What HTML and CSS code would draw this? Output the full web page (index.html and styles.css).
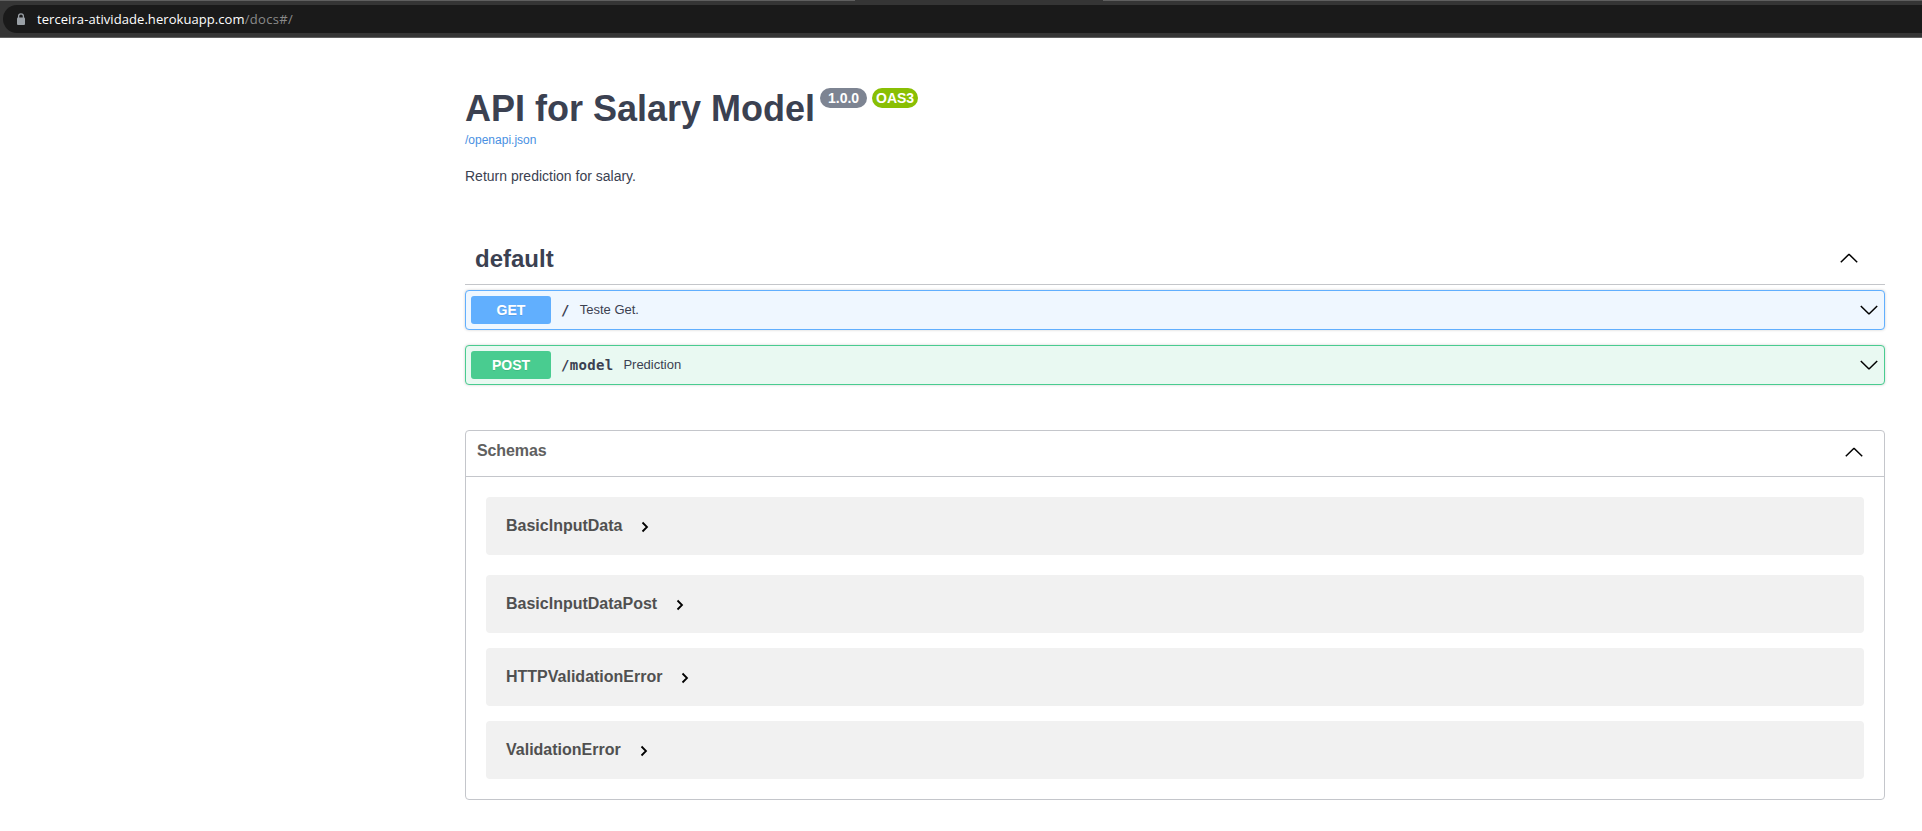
FILE: index.html
```html
<!DOCTYPE html>
<html lang="en">
<head>
<meta charset="utf-8">
<title>API for Salary Model</title>
<link rel="stylesheet" href="styles.css">
</head>
<body>
<header class="browser">
  <div class="tab-edge"><span class="tab-gap"></span></div>
  <div class="address">
    <svg class="lock" width="10" height="13" viewBox="0 0 10 13"><path d="M2.6 5.5V3.2a2.4 2.4 0 0 1 4.8 0v2.3" fill="none" stroke="#9aa0a6" stroke-width="1.3"/><rect x="1" y="4.5" width="8" height="7.5" rx="1" fill="#9aa0a6"/></svg>
    <span class="host">terceira-atividade.herokuapp.com</span><span class="path">/docs#/</span>
  </div>
</header>
<main class="docs">
  <section class="info">
    <div class="heading">
      <h1 class="title">API for Salary Model</h1>
      <span class="badge version">1.0.0</span>
      <span class="badge oas">OAS3</span>
    </div>
    <a class="spec-link">/openapi.json</a>
    <p class="description">Return prediction for salary.</p>
  </section>
  <section class="operations">
    <div class="tag">
      <h2 class="tag-name">default</h2>
      <svg class="chevron" width="20" height="12" viewBox="0 0 20 12"><path d="M1.8 10.2L10 2.2L18.2 10.2"/></svg>
    </div>
    <div class="operation get">
      <span class="method">GET</span><span class="route">/</span><span class="summary">Teste Get.</span>
      <svg class="chevron" width="20" height="12" viewBox="0 0 20 12"><path d="M1.8 2L10 10L18.2 2"/></svg>
    </div>
    <div class="operation post">
      <span class="method">POST</span><span class="route">/model</span><span class="summary">Prediction</span>
      <svg class="chevron" width="20" height="12" viewBox="0 0 20 12"><path d="M1.8 2L10 10L18.2 2"/></svg>
    </div>
  </section>
  <section class="schemas">
    <div class="schemas-head">
      <h4 class="schemas-title">Schemas</h4>
      <svg class="chevron" width="20" height="12" viewBox="0 0 20 12"><path d="M1.8 10.2L10 2.2L18.2 10.2"/></svg>
    </div>
    <div class="models">
      <div class="model first"><span>BasicInputData</span><svg class="caret" width="8" height="12" viewBox="0 0 8 12"><path d="M1.5 1.5L6 6L1.5 10.5"/></svg></div>
      <div class="model"><span>BasicInputDataPost</span><svg class="caret" width="8" height="12" viewBox="0 0 8 12"><path d="M1.5 1.5L6 6L1.5 10.5"/></svg></div>
      <div class="model"><span>HTTPValidationError</span><svg class="caret" width="8" height="12" viewBox="0 0 8 12"><path d="M1.5 1.5L6 6L1.5 10.5"/></svg></div>
      <div class="model"><span>ValidationError</span><svg class="caret" width="8" height="12" viewBox="0 0 8 12"><path d="M1.5 1.5L6 6L1.5 10.5"/></svg></div>
    </div>
  </section>
</main>
</body>
</html>
```

FILE: styles.css
```css
* { box-sizing: border-box; }
body { margin: 0; background: #fff; color: #3b4151; font-family: "Liberation Sans", Arial, sans-serif; overflow: hidden; }
h1, h2, h4, p { margin: 0; }

.browser { height: 38px; background: #353535; border-bottom: 1px solid #5f5f5f; }
.tab-edge { height: 1px; background: #5f5f5f; padding-left: 855px; }
.tab-gap { display: block; width: 248px; height: 1px; background: #353535; }
.address { display: flex; align-items: center; height: 28px; margin: 4px 0 0 3px; padding-left: 13px; border-radius: 14px 0 0 14px; background: #1a1a1a; font-family: "Open Sans", sans-serif; font-size: 13px; white-space: nowrap; }
.lock { margin: 0 11px 0 0; }
.host { color: #fff; letter-spacing: 0.07px; }
.path { color: #8a8a8a; letter-spacing: 0.35px; }

.docs { width: 1420px; margin-left: 465px; padding-top: 50px; }
.heading { display: flex; align-items: flex-start; height: 42px; }
.title { font-size: 36px; line-height: 41px; margin-right: 5px; }
.badge { height: 20px; border-radius: 20px; color: #fff; font-size: 14px; font-weight: bold; line-height: 20px; text-align: center; margin-right: 5px; }
.version { width: 47px; background: #7d8492; }
.oas { width: 46px; background: #89bf04; }
.spec-link { display: block; height: 19px; padding-top: 1px; font-size: 12px; line-height: 18px; color: #4990e2; }
.description { margin-top: 17px; font-size: 14px; line-height: 20px; }

.operations { margin-top: 48px; }
.tag { display: flex; align-items: center; justify-content: space-between; height: 51px; padding: 0 26px 3px 10px; border-bottom: 1px solid rgba(59, 65, 81, .3); }
.tag-name { padding-top: 2px; font-size: 24px; line-height: 28px; }
.chevron { fill: none; stroke: #000; stroke-width: 1.5; stroke-linejoin: bevel; }
.operation { display: flex; align-items: center; height: 40px; margin-bottom: 15px; padding: 0 5px; border: 1px solid; border-radius: 4px; box-shadow: 0 0 3px rgba(0, 0, 0, .19); }
.operation .chevron { margin-left: auto; }
.get { margin-top: 5px; border-color: #61affe; background: #eff7ff; }
.post { margin-bottom: 0; border-color: #49cc90; background: #e9f9f2; }
.method { width: 80px; height: 28px; border-radius: 3px; color: #fff; font-size: 14px; font-weight: bold; line-height: 28px; text-align: center; text-shadow: 0 1px 0 rgba(0, 0, 0, .1); }
.get .method { background: #61affe; }
.post .method { background: #49cc90; }
.route { margin-left: 10px; font-family: "DejaVu Sans Mono", monospace; font-size: 14px; font-weight: bold; letter-spacing: 0.3px; }
.summary { margin-left: 10px; padding-bottom: 2px; font-size: 13px; }

.schemas { height: 370px; margin-top: 45px; border: 1px solid #c4c6cb; border-radius: 4px; }
.schemas-head { display: flex; align-items: center; justify-content: space-between; height: 46px; padding: 0 20px 3px 11px; border-bottom: 1px solid #c4c6cb; }
.schemas-title { padding-bottom: 2px; color: #606060; font-size: 16px; line-height: 18px; letter-spacing: -0.1px; }
.models { display: flex; flex-direction: column; gap: 15px; padding: 20px; }
.model { display: flex; align-items: center; height: 58px; padding: 0 20px; border-radius: 4px; background: #f1f1f1; color: #505050; font-size: 16px; font-weight: bold; }
.first { margin-bottom: 5px; }
.caret { margin: 1px 0 0 19px; fill: none; stroke: #000; stroke-width: 1.8; }
```
